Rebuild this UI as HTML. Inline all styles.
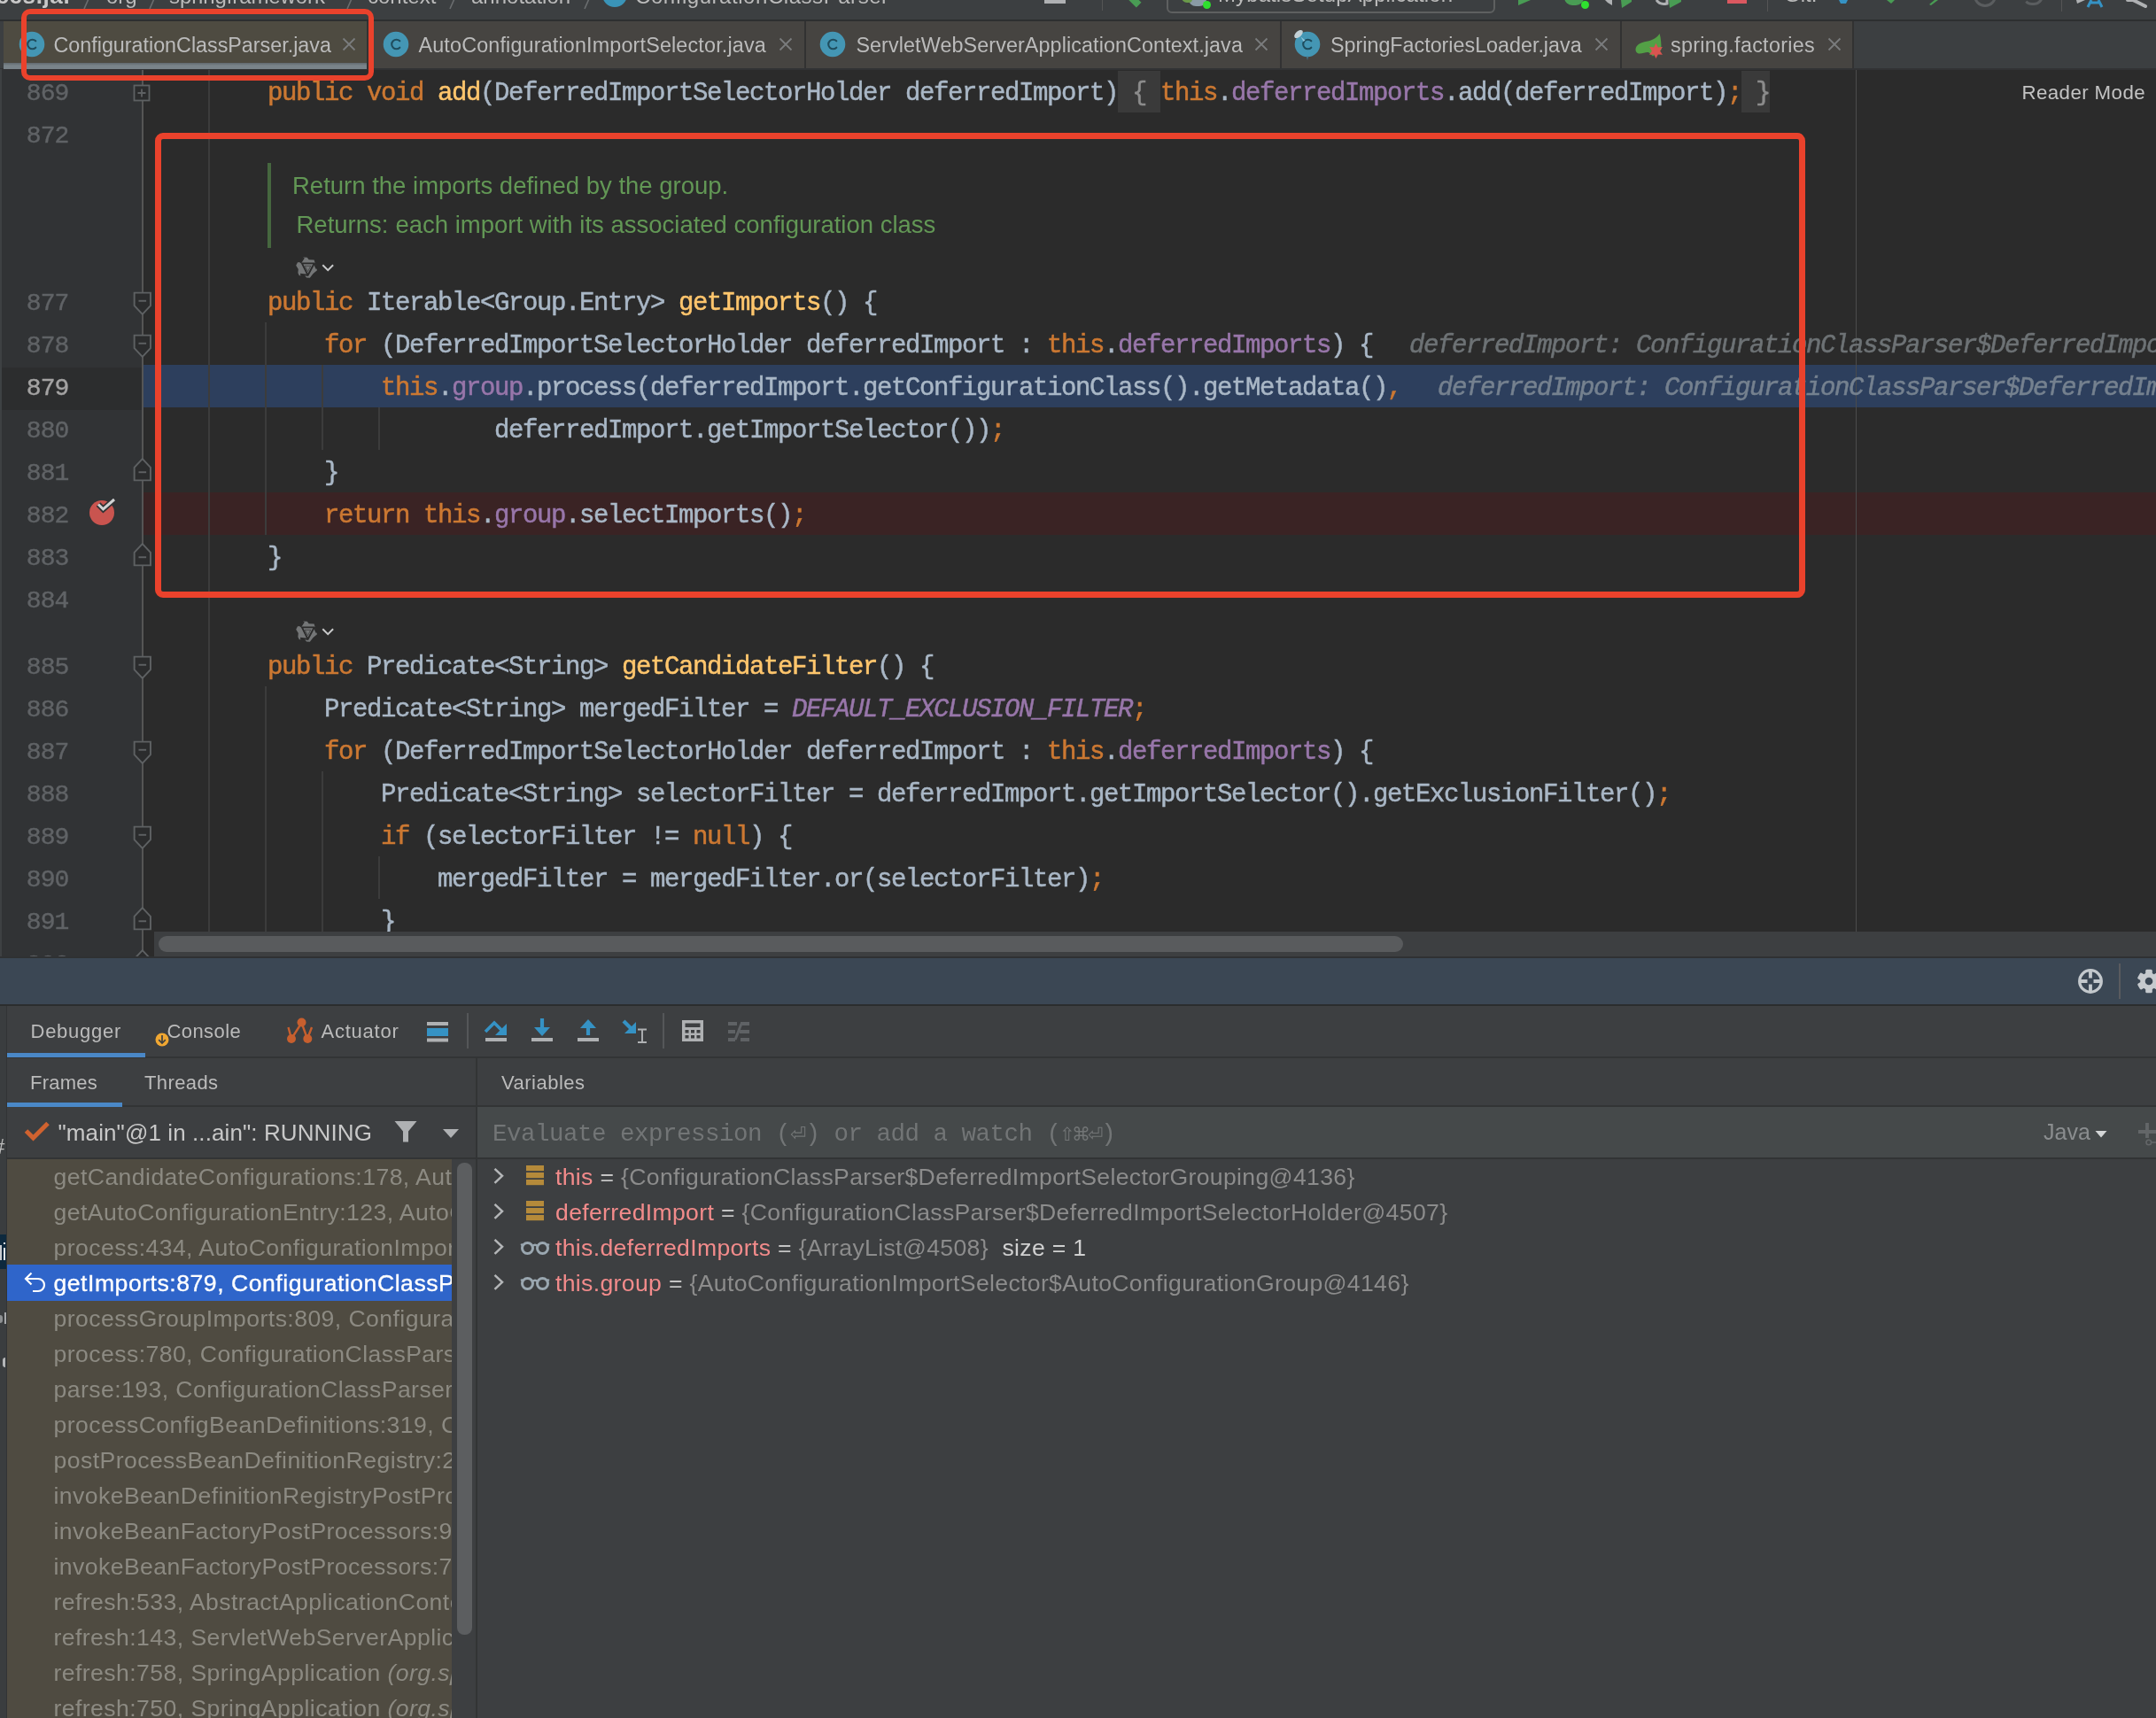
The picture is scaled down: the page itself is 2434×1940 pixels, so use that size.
<!DOCTYPE html>
<html><head><meta charset="utf-8"><title>IDE</title><style>
*{box-sizing:border-box;margin:0;padding:0}
html,body{width:2434px;height:1940px;overflow:hidden;background:#2b2b2b}
body{font-family:"Liberation Sans",sans-serif;color:#bbbbbb;position:relative}
.abs{position:absolute}
#top{position:absolute;left:0;top:0;width:2434px;height:22px;background:#3c3f41;overflow:hidden}
#topline{position:absolute;left:0;top:22px;width:2434px;height:2px;background:#2d2f30}
.bc{position:absolute;top:-19.5px;font-size:24px;line-height:30px;color:#bbbbbb;white-space:pre}
#tabs{position:absolute;left:0;top:24px;width:2434px;height:53px;background:#3c3f41;border-bottom:0}
.tab{position:absolute;top:0;height:53px;background:#464441;border-right:2px solid #323232}
.tab .t{position:absolute;top:12px;font-size:23.3px;line-height:30px;color:#bbbbbb;white-space:pre}
.tab svg{position:absolute}
.mono{font-family:"Liberation Mono",monospace}
/* editor */
#gutter{position:absolute;left:0;top:78px;width:161px;height:1003px;background:#313335}
#foldline{position:absolute;left:160px;top:78px;width:2px;height:1003px;background:#555555}
#editor{position:absolute;left:161px;top:78px;width:2273px;height:974px;background:#2b2b2b;overflow:hidden}
.ln{position:absolute;left:25.5px;width:52px;padding-top:2.5px;text-align:right;font-family:"Liberation Mono",monospace;font-size:28px;letter-spacing:-0.9px;line-height:48px;color:#606366;white-space:pre;-webkit-text-stroke:0.400px}
.cl{position:absolute;left:239px;height:48px;font-family:"Liberation Mono",monospace;font-size:29px;letter-spacing:-1.404px;line-height:48px;color:#a9b7c6;white-space:pre;padding-top:2.5px;-webkit-text-stroke:0.5px}
.k{color:#cc7832}.m{color:#ffc66d}.f{color:#9876aa}.sf{color:#9876aa;font-style:italic}
.h{color:#6d7275;font-style:italic}
.guide{position:absolute;width:1.500px;background:#3c3c3c}
.fb{position:absolute;background:#3a3a3a;top:80px;height:47px}
</style></head><body>
<div id="wrap" style="position:absolute;left:0;top:0;width:2434px;height:1940px;overflow:hidden;will-change:transform;transform:translateZ(0)">
<div id="gutter"></div><div id="foldline"></div>
<div class="abs" style="left:162px;top:78px;width:2272px;height:974px;background:#2b2b2b"></div>
<div class="abs" style="left:0;top:415px;width:160px;height:48px;background:#2c2d2e"></div>
<div class="abs" style="left:162px;top:412px;width:2272px;height:48px;background:#2d3f5d"></div>
<div class="abs" style="left:162px;top:556px;width:2272px;height:48px;background:#3a2324"></div>
<div class="guide" style="left:235px;top:78px;height:974px"></div>
<div class="guide" style="left:299px;top:364px;height:240px"></div>
<div class="guide" style="left:363px;top:412px;height:96px"></div>
<div class="guide" style="left:427px;top:460px;height:48px"></div>
<div class="guide" style="left:299px;top:775px;height:277px"></div>
<div class="guide" style="left:363px;top:871px;height:181px"></div>
<div class="guide" style="left:427px;top:967px;height:48px"></div>
<div class="abs" style="left:2095px;top:78px;width:1px;height:974px;background:#4b4b4b"></div>
<div class="fb" style="left:1262px;width:48px"></div><div class="fb" style="left:1966px;width:32px"></div>
<div class="ln" style="top:79.5px;color:#606366">869</div>
<div class="ln" style="top:127.5px;color:#606366">872</div>
<div class="ln" style="top:316px;color:#606366">877</div>
<div class="ln" style="top:364px;color:#606366">878</div>
<div class="ln" style="top:412px;color:#a4a3a3">879</div>
<div class="ln" style="top:460px;color:#606366">880</div>
<div class="ln" style="top:508px;color:#606366">881</div>
<div class="ln" style="top:556px;color:#606366">882</div>
<div class="ln" style="top:604px;color:#606366">883</div>
<div class="ln" style="top:652px;color:#606366">884</div>
<div class="ln" style="top:727px;color:#606366">885</div>
<div class="ln" style="top:775px;color:#606366">886</div>
<div class="ln" style="top:823px;color:#606366">887</div>
<div class="ln" style="top:871px;color:#606366">888</div>
<div class="ln" style="top:919px;color:#606366">889</div>
<div class="ln" style="top:967px;color:#606366">890</div>
<div class="ln" style="top:1015px;color:#606366">891</div>
<div class="ln" style="top:1063px;color:#606366">892</div>
<div class="cl" style="top:79.5px;left:302px"><span class="k">public</span> <span class="k">void</span> <span class="m">add</span>(DeferredImportSelectorHolder deferredImport) <span style="color:#8c8c8c">{</span> <span class="k">this</span>.<span class="f">deferredImports</span>.add(deferredImport)<span class="k">;</span> <span style="color:#8c8c8c">}</span></div>
<div class="cl" style="top:316px;left:302px"><span class="k">public</span> Iterable&lt;Group.Entry&gt; <span class="m">getImports</span>() {</div>
<div class="cl" style="top:364px;left:366px"><span class="k">for</span> (DeferredImportSelectorHolder deferredImport : <span class="k">this</span>.<span class="f">deferredImports</span>) {</div>
<div class="cl" style="top:412px;left:430px"><span class="k">this</span>.<span class="f">group</span>.process(deferredImport.getConfigurationClass().getMetadata()<span class="k">,</span></div>
<div class="cl" style="top:460px;left:558px">deferredImport.getImportSelector())<span class="k">;</span></div>
<div class="cl" style="top:508px;left:366px">}</div>
<div class="cl" style="top:556px;left:366px"><span class="k">return</span> <span class="k">this</span>.<span class="f">group</span>.selectImports()<span class="k">;</span></div>
<div class="cl" style="top:604px;left:302px">}</div>
<div class="cl" style="top:727px;left:302px"><span class="k">public</span> Predicate&lt;String&gt; <span class="m">getCandidateFilter</span>() {</div>
<div class="cl" style="top:775px;left:366px">Predicate&lt;String&gt; mergedFilter = <span class="sf">DEFAULT_EXCLUSION_FILTER</span><span class="k">;</span></div>
<div class="cl" style="top:823px;left:366px"><span class="k">for</span> (DeferredImportSelectorHolder deferredImport : <span class="k">this</span>.<span class="f">deferredImports</span>) {</div>
<div class="cl" style="top:871px;left:430px">Predicate&lt;String&gt; selectorFilter = deferredImport.getImportSelector().getExclusionFilter()<span class="k">;</span></div>
<div class="cl" style="top:919px;left:430px"><span class="k">if</span> (selectorFilter != <span class="k">null</span>) {</div>
<div class="cl" style="top:967px;left:494px">mergedFilter = mergedFilter.or(selectorFilter)<span class="k">;</span></div>
<div class="cl" style="top:1015px;left:430px">}</div>
<div class="cl" style="top:1063px;left:366px">}</div>
<div class="cl h" style="top:364px;left:1591px">deferredImport: ConfigurationClassParser$DeferredImportSelectorHolder@4507</div>
<div class="cl h" style="top:412px;left:1623px;color:#75818f">deferredImport: ConfigurationClassParser$DeferredImportSelectorHolder@4507</div>
<div class="abs" style="left:302px;top:184px;width:4px;height:96px;background:#46673f"></div>
<div class="abs" style="left:330px;top:192px;font-size:27.5px;line-height:36px;color:#629755;white-space:pre">Return the imports defined by the group.</div>
<div class="abs" style="left:334.5px;top:236px;font-size:27.5px;line-height:36px;color:#629755;white-space:pre">Returns:<span style="display:inline-block;width:8px"></span>each import with its associated configuration class</div>
<svg class="abs" width="46" height="26" viewBox="0 0 46 26" style="left:334px;top:290px"><path d="M8.400 0.500 L12.800 0.800 L14.700 3.200 L20.600 3.400 L23.200 12.300 L24 15.200 L19.500 19 L15.800 23.800 L12 23.600 L9.800 20.800 L3.900 21.200 L2.400 18.200 L2.800 14.100 L0.200 9.700 L2 6.300 L5.800 6 Z" fill="#747677"/><g fill="none" stroke="#2b2b2b" stroke-width="1.900" stroke-linejoin="round"><path d="M6.900 7.400 L20.800 7.400 L13.600 20.800 Z"/><path d="M9 1 L5.200 7 M20.800 7.400 L23.400 13.500 M13.600 20.800 L5 19.800"/></g><path d="M10.200 10.300 L16.800 10.300 L13.500 16.600 Z" fill="#747677" stroke="#2b2b2b" stroke-width="0.600"/><path d="M30.300 9.300 L36.200 15.200 L42.100 9.300" fill="none" stroke="#c9cacb" stroke-width="2"/></svg>
<svg class="abs" width="46" height="26" viewBox="0 0 46 26" style="left:334px;top:701px"><path d="M8.400 0.500 L12.800 0.800 L14.700 3.200 L20.600 3.400 L23.200 12.300 L24 15.200 L19.500 19 L15.800 23.800 L12 23.600 L9.800 20.800 L3.900 21.200 L2.400 18.200 L2.800 14.100 L0.200 9.700 L2 6.300 L5.800 6 Z" fill="#747677"/><g fill="none" stroke="#2b2b2b" stroke-width="1.900" stroke-linejoin="round"><path d="M6.900 7.400 L20.800 7.400 L13.600 20.800 Z"/><path d="M9 1 L5.200 7 M20.800 7.400 L23.400 13.500 M13.600 20.800 L5 19.800"/></g><path d="M10.200 10.300 L16.800 10.300 L13.500 16.600 Z" fill="#747677" stroke="#2b2b2b" stroke-width="0.600"/><path d="M30.300 9.300 L36.200 15.200 L42.100 9.300" fill="none" stroke="#c9cacb" stroke-width="2"/></svg>
<svg class="abs" width="20" height="20" viewBox="0 0 20 20" style="left:150px;top:94.5px"><rect x="1.5" y="1.5" width="17" height="17" fill="#2b2c2d" stroke="#5e6163" stroke-width="1.800"/><path d="M5.5 10 H14.5 M10 5.5 V14.5" stroke="#5e6163" stroke-width="1.800"/></svg>
<svg class="abs" width="21.600" height="28" viewBox="0 0 20 26" style="left:150px;top:329px"><path d="M1.5 1.5 H18.5 V15 L10 24 L1.5 15 Z" fill="#2b2c2d" stroke="#5e6163" stroke-width="1.800"/><path d="M6 10 H14" stroke="#5e6163" stroke-width="1.800"/></svg>
<svg class="abs" width="21.600" height="28" viewBox="0 0 20 26" style="left:150px;top:377px"><path d="M1.5 1.5 H18.5 V15 L10 24 L1.5 15 Z" fill="#2b2c2d" stroke="#5e6163" stroke-width="1.800"/><path d="M6 10 H14" stroke="#5e6163" stroke-width="1.800"/></svg>
<svg class="abs" width="21.600" height="28" viewBox="0 0 20 26" style="left:150px;top:740px"><path d="M1.5 1.5 H18.5 V15 L10 24 L1.5 15 Z" fill="#2b2c2d" stroke="#5e6163" stroke-width="1.800"/><path d="M6 10 H14" stroke="#5e6163" stroke-width="1.800"/></svg>
<svg class="abs" width="21.600" height="28" viewBox="0 0 20 26" style="left:150px;top:836px"><path d="M1.5 1.5 H18.5 V15 L10 24 L1.5 15 Z" fill="#2b2c2d" stroke="#5e6163" stroke-width="1.800"/><path d="M6 10 H14" stroke="#5e6163" stroke-width="1.800"/></svg>
<svg class="abs" width="21.600" height="28" viewBox="0 0 20 26" style="left:150px;top:932px"><path d="M1.5 1.5 H18.5 V15 L10 24 L1.5 15 Z" fill="#2b2c2d" stroke="#5e6163" stroke-width="1.800"/><path d="M6 10 H14" stroke="#5e6163" stroke-width="1.800"/></svg>
<svg class="abs" width="21.600" height="28" viewBox="0 0 20 26" style="left:150px;top:515.5px"><path d="M1.5 24.5 H18.5 V11 L10 2 L1.5 11 Z" fill="#2b2c2d" stroke="#5e6163" stroke-width="1.800"/><path d="M6 16 H14" stroke="#5e6163" stroke-width="1.800"/></svg>
<svg class="abs" width="21.600" height="28" viewBox="0 0 20 26" style="left:150px;top:611.5px"><path d="M1.5 24.5 H18.5 V11 L10 2 L1.5 11 Z" fill="#2b2c2d" stroke="#5e6163" stroke-width="1.800"/><path d="M6 16 H14" stroke="#5e6163" stroke-width="1.800"/></svg>
<svg class="abs" width="21.600" height="28" viewBox="0 0 20 26" style="left:150px;top:1022.5px"><path d="M1.5 24.5 H18.5 V11 L10 2 L1.5 11 Z" fill="#2b2c2d" stroke="#5e6163" stroke-width="1.800"/><path d="M6 16 H14" stroke="#5e6163" stroke-width="1.800"/></svg>
<svg class="abs" width="21.600" height="28" viewBox="0 0 20 26" style="left:150px;top:1070.5px"><path d="M1.5 24.5 H18.5 V11 L10 2 L1.5 11 Z" fill="#2b2c2d" stroke="#5e6163" stroke-width="1.800"/><path d="M6 16 H14" stroke="#5e6163" stroke-width="1.800"/></svg>
<svg class="abs" width="36" height="36" viewBox="0 0 36 36" style="left:98px;top:560px"><circle cx="17" cy="19" r="14" fill="#c9544f"/><path d="M13 9.5 L18.5 15 L31 4" fill="none" stroke="#313335" stroke-width="6.5"/><path d="M13 9.5 L18.5 15 L31 4" fill="none" stroke="#d0d2d3" stroke-width="3"/></svg>
<div class="abs" style="left:2282.500px;top:89.500px;font-size:22.300px;letter-spacing:0.400px;line-height:30px;color:#c3c3c3;white-space:pre">Reader Mode</div>
<div class="abs" style="left:0;top:77px;width:2434px;height:1.500px;background:#323335"></div>
<div class="abs" style="left:174px;top:1052px;width:2260px;height:29px;background:#3d3f41"></div>
<div class="abs" style="left:179px;top:1057px;width:1405px;height:18px;border-radius:9px;background:#595b5d"></div>
<div class="abs" style="left:0;top:78px;width:2px;height:1003px;background:#3e4143"></div>
<div id="top">
<div class="bc" style="left:-4.5px;font-weight:bold;color:#c8c8c8;font-size:26px;letter-spacing:0.600px;top:-20.200px">ces.jar</div>
<svg class="abs" style="left:91px;top:0" width="16" height="12"><path d="M11 -6 L4 10" stroke="#6a6d6f" stroke-width="1.6" fill="none"/></svg>
<svg class="abs" style="left:165px;top:0" width="16" height="12"><path d="M11 -6 L4 10" stroke="#6a6d6f" stroke-width="1.6" fill="none"/></svg>
<svg class="abs" style="left:388px;top:0" width="16" height="12"><path d="M11 -6 L4 10" stroke="#6a6d6f" stroke-width="1.6" fill="none"/></svg>
<svg class="abs" style="left:504px;top:0" width="16" height="12"><path d="M11 -6 L4 10" stroke="#6a6d6f" stroke-width="1.6" fill="none"/></svg>
<svg class="abs" style="left:656px;top:0" width="16" height="12"><path d="M11 -6 L4 10" stroke="#6a6d6f" stroke-width="1.6" fill="none"/></svg>
<div class="bc" style="left:120px;">org</div>
<div class="bc" style="left:191px;letter-spacing:-0.1px">springframework</div>
<div class="bc" style="left:415px;">context</div>
<div class="bc" style="left:532px;">annotation</div>
<div class="bc" style="left:717px;letter-spacing:0.55px">ConfigurationClassParser</div>
<div class="abs" style="left:680px;top:-20px;width:28px;height:28px;border-radius:14px;background:#3a94b8"></div>
<div class="abs" style="left:1179px;top:-6px;width:24px;height:10px;background:#afb1b3;border-radius:6px 6px 0 0"></div>
<div class="abs" style="left:1244px;top:0;width:1px;height:12px;background:#555"></div>
<div class="abs" style="left:1276px;top:-8px;width:8px;height:16px;background:#499c54;transform:rotate(-45deg)"></div>
<div class="abs" style="left:1317px;top:-20px;width:371px;height:35px;border:2px solid #5e6060;border-radius:6px"></div>
<div class="abs" style="left:1342px;top:-10px;width:20px;height:17px;background:#8a9ba5;border-radius:0 0 8px 8px"></div>
<div class="abs" style="left:1334px;top:-8px;width:12px;height:11px;background:#6a9a4a;border-radius:0 0 4px 6px"></div>
<div class="abs" style="left:1358px;top:1px;width:9px;height:9px;border-radius:5px;background:#2fe02f"></div>
<div class="bc" style="left:1375px;letter-spacing:0.1px;top:-21.500px">MybatisSetupApplication</div>
<svg class="abs" style="left:1712px;top:0" width="20" height="8"><path d="M2 0 L16 0 L2 6Z" fill="#499c54"/></svg>
<div class="abs" style="left:1766px;top:-8px;width:22px;height:14px;background:#499c54;border-radius:0 0 9px 9px"></div>
<div class="abs" style="left:1785px;top:1px;width:9px;height:9px;border-radius:5px;background:#2fe02f"></div>
<svg class="abs" style="left:1812px;top:0" width="40" height="10"><path d="M0 0 L8 0 L8 6 L3 3Z" fill="#afb1b3"/><path d="M18 0 L30 0 L30 2 L19 9Z" fill="#499c54"/></svg>
<svg class="abs" style="left:1868px;top:0" width="36" height="10"><path d="M2 0 Q6 6 14 4 L14 0" fill="none" stroke="#afb1b3" stroke-width="3"/><path d="M16 0 L30 0 L30 2 L17 9Z" fill="#499c54"/></svg>
<div class="abs" style="left:1950px;top:-8px;width:22px;height:12px;background:#db5860"></div>
<div class="abs" style="left:1995px;top:0;width:1px;height:13px;background:#555"></div>
<div class="bc" style="left:2014px;top:-21.500px">Git:</div>
<svg class="abs" style="left:2072px;top:0" width="24" height="8"><path d="M4 0 L14 0 L12 4 L6 4Z" fill="#3592c4"/></svg>
<svg class="abs" style="left:2124px;top:0" width="24" height="8"><path d="M6 0 L11 4 L15 0Z" fill="#499c54"/></svg>
<svg class="abs" style="left:2172px;top:0" width="24" height="8"><path d="M6 5 L12 0 L16 0 L8 6Z" fill="#499c54"/></svg>
<div class="abs" style="left:2228px;top:-18px;width:26px;height:26px;border-radius:13px;border:3px solid #5a5d5f"></div>
<div class="abs" style="left:2283px;top:-16px;width:24px;height:22px;border-radius:11px;border:3px solid #5a5d5f;border-left-color:transparent;border-top-color:transparent"></div>
<div class="abs" style="left:2327px;top:0;width:1px;height:13px;background:#555"></div>
<svg class="abs" style="left:2340px;top:0" width="44" height="10"><path d="M4 0 L14 0 L5 4Z" fill="#afb1b3"/><path d="M17 8 L21 0 M33 8 L29 0 M20 3 L30 3" stroke="#3592c4" stroke-width="3" fill="none"/></svg>
<svg class="abs" style="left:2398px;top:0" width="36" height="10"><path d="M4 0 L10 0 M10 0 L24 7" stroke="#afb1b3" stroke-width="4" fill="none" stroke-linecap="round"/></svg>
</div><div id="topline"></div>
<div id="tabs">
<div class="tab" style="left:4px;width:412px;background:#4e4b41">
<svg width="30" height="30" viewBox="0 0 30 30" style="left:16.5px;top:10.700px"><circle cx="15" cy="15" r="14.3" fill="#4496b4"/><path d="M19.300 11.300 A5.300 5.300 0 1 0 19.300 18.700" fill="none" stroke="#1f4d5e" stroke-width="2.1" stroke-linecap="round"/></svg>
<div class="t" style="left:56.5px;letter-spacing:0px">ConfigurationClassParser.java</div>
<svg width="16" height="16" viewBox="0 0 16 16" style="left:382px;top:18px"><path d="M1.5 1.5 L14.5 14.5 M14.5 1.5 L1.5 14.5" stroke="#7a7c7d" stroke-width="1.8" fill="none"/></svg>
<div class="abs" style="left:0;top:46.500px;width:100%;height:7.500px;background:linear-gradient(#626a6f,#7a848a 45%,#7a848a)"></div>
</div>
<div class="tab" style="left:416px;width:494px;background:#464441">
<svg width="30" height="30" viewBox="0 0 30 30" style="left:15.600000000000023px;top:10.700px"><circle cx="15" cy="15" r="14.3" fill="#4496b4"/><path d="M19.300 11.300 A5.300 5.300 0 1 0 19.300 18.700" fill="none" stroke="#1f4d5e" stroke-width="2.1" stroke-linecap="round"/></svg>
<div class="t" style="left:56.5px;letter-spacing:0.18px">AutoConfigurationImportSelector.java</div>
<svg width="16" height="16" viewBox="0 0 16 16" style="left:463px;top:18px"><path d="M1.5 1.5 L14.5 14.5 M14.5 1.5 L1.5 14.5" stroke="#7a7c7d" stroke-width="1.8" fill="none"/></svg>
</div>
<div class="tab" style="left:910px;width:537px;background:#464441">
<svg width="30" height="30" viewBox="0 0 30 30" style="left:15px;top:10.700px"><circle cx="15" cy="15" r="14.3" fill="#4496b4"/><path d="M19.300 11.300 A5.300 5.300 0 1 0 19.300 18.700" fill="none" stroke="#1f4d5e" stroke-width="2.1" stroke-linecap="round"/></svg>
<div class="t" style="left:56.39999999999998px;letter-spacing:0.115px">ServletWebServerApplicationContext.java</div>
<svg width="16" height="16" viewBox="0 0 16 16" style="left:506px;top:18px"><path d="M1.5 1.5 L14.5 14.5 M14.5 1.5 L1.5 14.5" stroke="#7a7c7d" stroke-width="1.8" fill="none"/></svg>
</div>
<div class="tab" style="left:1447px;width:384px;background:#464441">
<svg width="30" height="30" viewBox="0 0 30 30" style="left:14px;top:10.700px"><circle cx="15" cy="15" r="14.3" fill="#4496b4"/><path d="M19.300 11.300 A5.300 5.300 0 1 0 19.300 18.700" fill="none" stroke="#1f4d5e" stroke-width="2.1" stroke-linecap="round"/></svg>
<svg width="20" height="44" viewBox="0 0 20 44" style="left:11px;top:6px"><ellipse cx="8" cy="8.500" rx="5.800" ry="3.200" transform="rotate(-42 8 8.500)" fill="#c3d0d6"/><path d="M10.500 11.500 L15.500 15.500 L13.500 17 Z" fill="#8fc6dc"/><path d="M17 33.500 L19 33.500 L18 38 Z" fill="#4a7f95"/></svg>
<div class="t" style="left:55px;letter-spacing:0px">SpringFactoriesLoader.java</div>
<svg width="16" height="16" viewBox="0 0 16 16" style="left:353px;top:18px"><path d="M1.5 1.5 L14.5 14.5 M14.5 1.5 L1.5 14.5" stroke="#7a7c7d" stroke-width="1.8" fill="none"/></svg>
</div>
<div class="tab" style="left:1831px;width:262px;background:#464441">
<svg width="34" height="30" viewBox="0 0 34 30" style="left:15px;top:14px"><path d="M27.600 0 C25 4 20 7.500 13 8.800 C6 10 1 13 0.500 17.500 C0.300 20.500 2.500 22.500 5 22.500 C9 22.500 12 20.500 15 21 L20 25.500 L29.300 18.600 C29.800 12 29 5 27.600 0 Z" fill="#53a046"/><path d="M23.5 10.8 L25.8 15.4 L30.9 15.1 L28.1 19.4 L30.9 23.7 L25.8 23.4 L23.5 28.0 L21.2 23.4 L16.1 23.7 L18.9 19.4 L16.1 15.1 L21.2 15.4Z" fill="#d85450"/></svg>
<div class="t" style="left:55px;letter-spacing:0.31px">spring.factories</div>
<svg width="16" height="16" viewBox="0 0 16 16" style="left:231.5999999999999px;top:18px"><path d="M1.5 1.5 L14.5 14.5 M14.5 1.5 L1.5 14.5" stroke="#7a7c7d" stroke-width="1.8" fill="none"/></svg>
</div>
</div>
<div class="abs" style="left:0;top:1080px;width:2434px;height:2px;background:#2f3133"></div>
<div class="abs" style="left:0;top:1082px;width:2434px;height:52px;background:#3b4754"></div>
<div class="abs" style="left:0;top:1134px;width:2434px;height:2px;background:#2b2d2e"></div>
<div class="abs" style="left:0;top:1136px;width:2434px;height:804px;background:#3d3f41"></div>
<svg class="abs" width="32" height="32" viewBox="0 0 32 32" style="left:2344px;top:1092px"><circle cx="16" cy="16" r="12.300" fill="none" stroke="#c3c8cc" stroke-width="3.300"/><path d="M16 3 V12.500 M16 19.500 V29 M3 16 H12.500 M19.500 16 H29" stroke="#c3c8cc" stroke-width="3.800"/></svg>
<div class="abs" style="left:2392px;top:1088px;width:2px;height:40px;background:#5a5b5f"></div>
<svg class="abs" width="32" height="32" viewBox="0 0 32 32" style="left:2410px;top:1092px"><g fill="#c6cace"><circle cx="16" cy="16" r="9.800"/><rect x="12.200" y="2.800" width="7.600" height="26.400" rx="1.500"/><rect x="12.200" y="2.800" width="7.600" height="26.400" rx="1.500" transform="rotate(60 16 16)"/><rect x="12.200" y="2.800" width="7.600" height="26.400" rx="1.500" transform="rotate(120 16 16)"/></g><circle cx="16" cy="16" r="4.300" fill="#3b4754"/></svg>
<div class="abs" style="left:8px;top:1193px;width:2426px;height:2px;background:#323435"></div>
<div class="abs" style="left:8px;top:1248px;width:2426px;height:2px;background:#323435"></div>
<div class="abs" style="left:8px;top:1307px;width:2426px;height:2px;background:#323435"></div>
<div class="abs" style="left:0;top:1136px;width:7px;height:804px;background:#3a3d3f"></div>
<div class="abs" style="left:7px;top:1136px;width:1px;height:804px;background:#323435"></div>
<div class="abs" style="left:0;top:1394px;width:7px;height:39px;background:#0d293e"></div>
<div class="abs" style="left:3.800px;top:1408.500px;width:2.200px;height:14.500px;background:#e4e6e8"></div>
<div class="abs" style="left:3.600px;top:1402.500px;width:2.600px;height:2.800px;background:#e4e6e8"></div>
<div class="abs" style="left:0;top:1406px;width:1.500px;height:17px;background:#c9ccd0"></div>
<div class="abs" style="left:5px;top:1482px;width:1.600px;height:12.500px;background:#a6a8aa"></div>
<div class="abs" style="left:0;top:1484.500px;width:2.500px;height:9.500px;background:#8d9092;border-radius:0 3px 3px 0"></div>
<div class="abs" style="left:2.500px;top:1532.500px;width:3px;height:11px;background:#b4b6b8;border-radius:3px 0 0 3px"></div>
<div class="abs" style="left:-8px;top:1281px;font-size:24px;color:#bbb">#</div>
<div class="abs" style="left:34.5px;top:1149.5px;font-size:22px;line-height:30px;color:#bbbbbb;white-space:pre;letter-spacing:0.740px">Debugger</div>
<div class="abs" style="left:188.5px;top:1149.5px;font-size:22px;line-height:30px;color:#bbbbbb;white-space:pre;letter-spacing:0.410px">Console</div>
<div class="abs" style="left:362.5px;top:1149.5px;font-size:22px;line-height:30px;color:#bbbbbb;white-space:pre;letter-spacing:0.760px">Actuator</div>
<div class="abs" style="left:8px;top:1189px;width:156px;height:4.5px;background:#4a88c7"></div>
<svg class="abs" width="16" height="16" viewBox="0 0 16 16" style="left:175px;top:1165.5px"><circle cx="8" cy="8" r="7.5" fill="#f0a732"/><path d="M8 3 V12 M4.2 8.2 L8 12 L11.8 8.2" stroke="#3c3f41" stroke-width="1.7" fill="none"/></svg>
<svg class="abs" width="34" height="32" viewBox="0 0 34 32" style="left:322px;top:1146px"><g stroke="#c75f2e" stroke-width="2.4" fill="none"><path d="M7 27 L18.5 9 L25 27 M7 27 L3.5 14 M25 27 L30 14"/></g><circle cx="18.5" cy="8.5" r="5" fill="#c75f2e"/><circle cx="7" cy="27" r="5" fill="#c75f2e"/><circle cx="25.3" cy="27" r="5" fill="#c75f2e"/></svg>
<svg class="abs" width="26" height="24" viewBox="0 0 26 24" style="left:481px;top:1153px"><rect x="1" y="1" width="24" height="4" fill="#afb1b3"/><rect x="1" y="8" width="24" height="9" fill="#3592c4"/><rect x="1" y="19.5" width="24" height="4" fill="#afb1b3"/></svg>
<div class="abs" style="left:527px;top:1144px;width:1.5px;height:40px;background:#555759"></div>
<svg class="abs" width="28" height="26" viewBox="0 0 28 26" style="left:545.5px;top:1151px"><rect x="2" y="21" width="24" height="4" fill="#afb1b3"/><path d="M2 14 L12 4 L21 13" fill="none" stroke="#3592c4" stroke-width="3.6"/><path d="M26 5 V18 H13 Z" fill="#3592c4"/></svg>
<svg class="abs" width="28" height="28" viewBox="0 0 28 28" style="left:598px;top:1149px"><rect x="2" y="23" width="24" height="4" fill="#afb1b3"/><path d="M14 1 V14" stroke="#3592c4" stroke-width="4.2"/><path d="M5 11 H23 L14 21 Z" fill="#3592c4"/></svg>
<svg class="abs" width="28" height="28" viewBox="0 0 28 28" style="left:650px;top:1149px"><rect x="2" y="23" width="24" height="4" fill="#afb1b3"/><path d="M14 20 V9" stroke="#3592c4" stroke-width="4.2"/><path d="M5 12 H23 L14 2 Z" fill="#3592c4"/></svg>
<svg class="abs" width="32" height="30" viewBox="0 0 32 30" style="left:701px;top:1149px"><path d="M3 4 L13 14" stroke="#3592c4" stroke-width="4.2"/><path d="M17 5 V18 H4 Z" fill="#3592c4"/><path d="M19 13.5 H29 M24 13.5 V28 M19 28 H29" stroke="#afb1b3" stroke-width="1.9" fill="none"/></svg>
<div class="abs" style="left:748px;top:1144px;width:1.5px;height:40px;background:#555759"></div>
<svg class="abs" width="26" height="26" viewBox="0 0 26 26" style="left:769px;top:1151px"><path fill-rule="evenodd" fill="#afb1b3" d="M1 1 H25 V25 H1 Z M4.5 4.5 V9 H21.5 V4.5 Z M4.500 12 h4 v3.5 h-4 Z M11 12 h4 v3.5 h-4 Z M17.5 12 h4 v3.5 h-4 Z M4.500 18 h4 v3.5 h-4 Z M11 18 h4 v3.5 h-4 Z M17.5 18 h4 v3.5 h-4 Z"/></svg>
<svg class="abs" width="26" height="24" viewBox="0 0 26 24" style="left:821px;top:1153px"><g fill="#5f6265"><rect x="1" y="1" width="10" height="4"/><rect x="15" y="1" width="10" height="4"/><rect x="1" y="10" width="8" height="4"/><rect x="14" y="10" width="11" height="4"/><rect x="1" y="19" width="8" height="4"/><rect x="15" y="19" width="10" height="4"/></g><path d="M16 3 L9 21" stroke="#5f6265" stroke-width="3"/></svg>
<div class="abs" style="left:34px;top:1207.5px;font-size:22px;line-height:30px;color:#bbbbbb;white-space:pre;letter-spacing:0.220px">Frames</div>
<div class="abs" style="left:163px;top:1207.5px;font-size:22px;line-height:30px;color:#bbbbbb;white-space:pre;letter-spacing:0.390px">Threads</div>
<div class="abs" style="left:566px;top:1207.5px;font-size:22px;line-height:30px;color:#bbbbbb;white-space:pre;letter-spacing:0.490px">Variables</div>
<div class="abs" style="left:8px;top:1245px;width:130px;height:5px;background:#4a88c7"></div>
<div class="abs" style="left:537px;top:1195px;width:2px;height:745px;background:#323435"></div>
<svg class="abs" width="32" height="26" viewBox="0 0 32 26" style="left:26px;top:1264px"><path d="M3.5 13 L11.500 21 L28 4.500" fill="none" stroke="#d0622f" stroke-width="5"/></svg>
<div class="abs" style="left:65.5px;top:1262px;font-size:26px;line-height:30px;color:#c8c8c8;white-space:pre;line-height:34px;letter-spacing:0.100px">"main"@1 in ...ain": RUNNING</div>
<svg class="abs" width="26" height="26" viewBox="0 0 26 26" style="left:445px;top:1265px"><path d="M0.5 1 H25.5 L16 12.5 V24.5 H10 V12.5 Z" fill="#afb1b3"/></svg>
<svg class="abs" width="20" height="12" viewBox="0 0 20 12" style="left:499px;top:1274px"><path d="M1 1 H19 L10 11 Z" fill="#afb1b3"/></svg>
<div class="abs" style="left:539px;top:1250px;width:1895px;height:57px;background:#45494a"></div>
<div class="abs mono" style="left:556px;top:1260.500px;font-size:27.5px;letter-spacing:-0.5px;line-height:40px;color:#727576;white-space:pre">Evaluate expression (<span style="font-family:'Liberation Sans';font-size:22px">&#x23CE;</span>) or add a watch (<span style="font-family:'Liberation Sans';font-size:21px;letter-spacing:-3.500px;margin-left:-2px">&#x21E7;&#x2318;&#x23CE;</span><span style="margin-left:1px">)</span></div>
<div class="abs" style="left:2307px;top:1263px;font-size:25px;line-height:30px;color:#8a8d8f;white-space:pre;">Java</div>
<svg class="abs" width="14" height="9" viewBox="0 0 14 9" style="left:2365px;top:1276px"><path d="M0.500 1 H13.5 L7 8.500 Z" fill="#d4d6d7"/></svg>
<svg class="abs" width="30" height="34" viewBox="0 0 30 34" style="left:2413px;top:1262px"><path d="M1 16 H23 M11 6 V23" stroke="#636668" stroke-width="3.800"/><circle cx="12.800" cy="28" r="2.800" fill="none" stroke="#636668" stroke-width="1.600"/><path d="M15.600 28 H24" stroke="#636668" stroke-width="1.600"/></svg>
<div class="abs" style="left:8px;top:1309px;width:502px;height:631px;background:#4f4b41;overflow:hidden">
<div class="abs" style="left:52.5px;top:2px;font-size:26.6px;line-height:36px;color:#8c8a82;letter-spacing:0.430px;white-space:pre">getCandidateConfigurations:178, AutoConfigurationImportSelector</div>
<div class="abs" style="left:52.5px;top:42px;font-size:26.6px;line-height:36px;color:#8c8a82;letter-spacing:0.430px;white-space:pre">getAutoConfigurationEntry:123, AutoConfigurationImportSelector</div>
<div class="abs" style="left:52.5px;top:82px;font-size:26.6px;line-height:36px;color:#8c8a82;letter-spacing:0.430px;white-space:pre">process:434, AutoConfigurationImportSelector&#36;AutoConfigurationGroup</div>
<div class="abs" style="left:0;top:119px;width:502px;height:41px;background:#2f65ca"></div>
<svg class="abs" width="28" height="26" viewBox="0 0 28 26" style="left:18px;top:126px"><path d="M9.500 2.5 L3 9 L9.500 15.500 M3 9 H17 A7 7 0 0 1 17 23 H11" fill="none" stroke="#ffffff" stroke-width="2.2"/></svg>
<div class="abs" style="left:52.5px;top:122px;font-size:26.6px;line-height:36px;color:#ffffff;-webkit-text-stroke:0.350px #ffffff;letter-spacing:0.520px;white-space:pre">getImports:879, ConfigurationClassParser&#36;DeferredImportSelectorGrouping</div>
<div class="abs" style="left:52.5px;top:162px;font-size:26.6px;line-height:36px;color:#8c8a82;letter-spacing:0.430px;white-space:pre">processGroupImports:809, ConfigurationClassParser&#36;DeferredImportSelectorGroupingHandler</div>
<div class="abs" style="left:52.5px;top:202px;font-size:26.6px;line-height:36px;color:#8c8a82;letter-spacing:0.430px;white-space:pre">process:780, ConfigurationClassParser&#36;DeferredImportSelectorHandler</div>
<div class="abs" style="left:52.5px;top:242px;font-size:26.6px;line-height:36px;color:#8c8a82;letter-spacing:0.430px;white-space:pre">parse:193, ConfigurationClassParser <i>(org.springframework.context.annotation)</i></div>
<div class="abs" style="left:52.5px;top:282px;font-size:26.6px;line-height:36px;color:#8c8a82;letter-spacing:0.430px;white-space:pre">processConfigBeanDefinitions:319, ConfigurationClassPostProcessor</div>
<div class="abs" style="left:52.5px;top:322px;font-size:26.6px;line-height:36px;color:#8c8a82;letter-spacing:0.430px;white-space:pre">postProcessBeanDefinitionRegistry:232, ConfigurationClassPostProcessor</div>
<div class="abs" style="left:52.5px;top:362px;font-size:26.6px;line-height:36px;color:#8c8a82;letter-spacing:0.430px;white-space:pre">invokeBeanDefinitionRegistryPostProcessors:275, PostProcessorRegistrationDelegate</div>
<div class="abs" style="left:52.5px;top:402px;font-size:26.6px;line-height:36px;color:#8c8a82;letter-spacing:0.430px;white-space:pre">invokeBeanFactoryPostProcessors:95, PostProcessorRegistrationDelegate</div>
<div class="abs" style="left:52.5px;top:442px;font-size:26.6px;line-height:36px;color:#8c8a82;letter-spacing:0.430px;white-space:pre">invokeBeanFactoryPostProcessors:706, AbstractApplicationContext</div>
<div class="abs" style="left:52.5px;top:482px;font-size:26.6px;line-height:36px;color:#8c8a82;letter-spacing:0.430px;white-space:pre">refresh:533, AbstractApplicationContext <i>(org.springframework.context.support)</i></div>
<div class="abs" style="left:52.5px;top:522px;font-size:26.6px;line-height:36px;color:#8c8a82;letter-spacing:0.430px;white-space:pre">refresh:143, ServletWebServerApplicationContext</div>
<div class="abs" style="left:52.5px;top:562px;font-size:26.6px;line-height:36px;color:#8c8a82;letter-spacing:0.430px;white-space:pre">refresh:758, SpringApplication <i>(org.springframework.boot)</i></div>
<div class="abs" style="left:52.5px;top:602px;font-size:26.6px;line-height:36px;color:#8c8a82;letter-spacing:0.430px;white-space:pre">refresh:750, SpringApplication <i>(org.springframework.boot)</i></div>
</div>
<div class="abs" style="left:510px;top:1309px;width:27px;height:631px;background:#3d3f41"></div>
<div class="abs" style="left:516px;top:1313px;width:16.5px;height:533px;border-radius:8px;background:#5c5e60"></div>
<svg class="abs" width="14" height="22" viewBox="0 0 14 22" style="left:555.500px;top:1317px"><path d="M2.500 2.800 L11 10.800 L2.500 18.800" fill="none" stroke="#b4b6b8" stroke-width="2.500"/></svg>
<svg class="abs" width="22" height="24" viewBox="0 0 22 24" style="left:593px;top:1316px"><rect x="1" y="0" width="20" height="6.200" fill="#b58a3a"/><rect x="1" y="8" width="20" height="6.200" fill="#b58a3a"/><rect x="1" y="16" width="20" height="6.200" fill="#b58a3a"/></svg>
<div class="abs" style="left:627px;top:1311px;font-size:26.6px;letter-spacing:0.340px;line-height:36px;white-space:pre;color:#f28b8b">this<span style="color:#c4c4c4"> = </span><span style="color:#8c8c8c">{ConfigurationClassParser&#36;DeferredImportSelectorGrouping@4136}</span><span style="color:#d0d0d0"></span></div>
<svg class="abs" width="14" height="22" viewBox="0 0 14 22" style="left:555.500px;top:1357px"><path d="M2.500 2.800 L11 10.800 L2.500 18.800" fill="none" stroke="#b4b6b8" stroke-width="2.500"/></svg>
<svg class="abs" width="22" height="24" viewBox="0 0 22 24" style="left:593px;top:1356px"><rect x="1" y="0" width="20" height="6.200" fill="#b58a3a"/><rect x="1" y="8" width="20" height="6.200" fill="#b58a3a"/><rect x="1" y="16" width="20" height="6.200" fill="#b58a3a"/></svg>
<div class="abs" style="left:627px;top:1351px;font-size:26.6px;letter-spacing:0.340px;line-height:36px;white-space:pre;color:#f28b8b">deferredImport<span style="color:#c4c4c4"> = </span><span style="color:#8c8c8c">{ConfigurationClassParser&#36;DeferredImportSelectorHolder@4507}</span><span style="color:#d0d0d0"></span></div>
<svg class="abs" width="14" height="22" viewBox="0 0 14 22" style="left:555.500px;top:1397px"><path d="M2.500 2.800 L11 10.800 L2.500 18.800" fill="none" stroke="#b4b6b8" stroke-width="2.500"/></svg>
<svg class="abs" width="34" height="16" viewBox="0 0 34 16" style="left:587px;top:1401px"><circle cx="8.500" cy="8.5" r="6" fill="none" stroke="#9aa7b0" stroke-width="3"/><circle cx="25.500" cy="8.500" r="6" fill="none" stroke="#9aa7b0" stroke-width="3"/><path d="M14 6 Q17 3.500 20 6 M1 5 L3 4 M33 5 L31 4" fill="none" stroke="#9aa7b0" stroke-width="2.4"/></svg>
<div class="abs" style="left:627px;top:1391px;font-size:26.6px;letter-spacing:0.340px;line-height:36px;white-space:pre;color:#f28b8b">this.deferredImports<span style="color:#c4c4c4"> = </span><span style="color:#8c8c8c">{ArrayList@4508}</span><span style="color:#d0d0d0">  size = 1</span></div>
<svg class="abs" width="14" height="22" viewBox="0 0 14 22" style="left:555.500px;top:1437px"><path d="M2.500 2.800 L11 10.800 L2.500 18.800" fill="none" stroke="#b4b6b8" stroke-width="2.500"/></svg>
<svg class="abs" width="34" height="16" viewBox="0 0 34 16" style="left:587px;top:1441px"><circle cx="8.500" cy="8.5" r="6" fill="none" stroke="#9aa7b0" stroke-width="3"/><circle cx="25.500" cy="8.500" r="6" fill="none" stroke="#9aa7b0" stroke-width="3"/><path d="M14 6 Q17 3.500 20 6 M1 5 L3 4 M33 5 L31 4" fill="none" stroke="#9aa7b0" stroke-width="2.4"/></svg>
<div class="abs" style="left:627px;top:1431px;font-size:26.6px;letter-spacing:0.340px;line-height:36px;white-space:pre;color:#f28b8b">this.group<span style="color:#c4c4c4"> = </span><span style="color:#8c8c8c">{AutoConfigurationImportSelector&#36;AutoConfigurationGroup@4146}</span><span style="color:#d0d0d0"></span></div>
<div class="abs" style="left:24.300px;top:9.500px;width:397.700px;height:81.500px;border:6.500px solid #ea422c;border-radius:10px"></div>
<div class="abs" style="left:174.500px;top:149.500px;width:1863px;height:525px;border:7px solid #ea422c;border-radius:9px"></div>
</div>
</body></html>
